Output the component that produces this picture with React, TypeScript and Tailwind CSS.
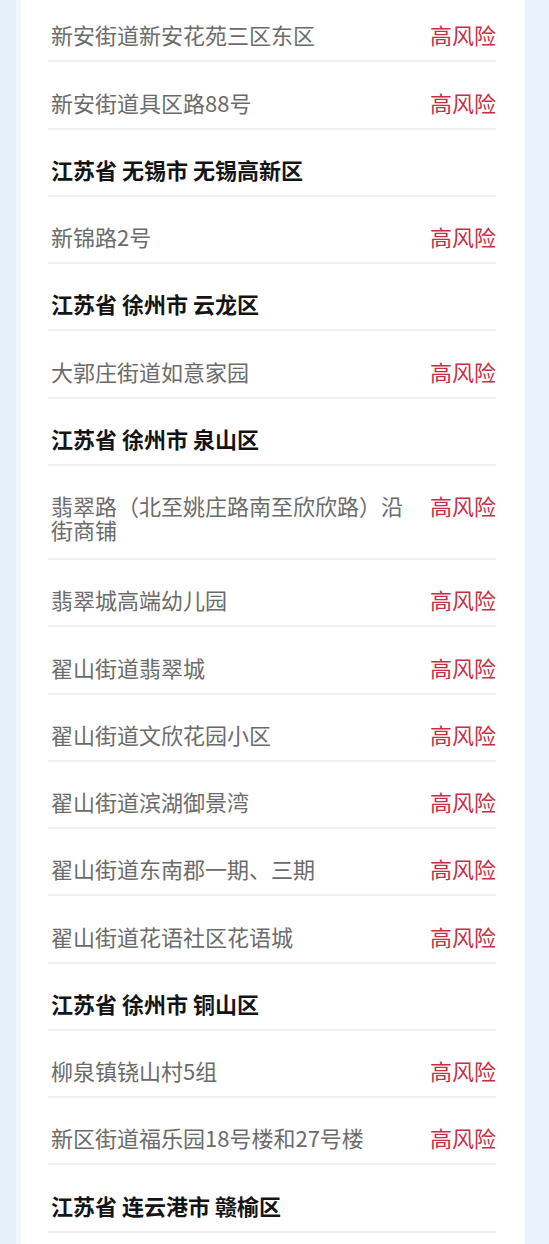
import React from "react";

type Row = { t: string; h?: boolean; m?: boolean };

const rows: Row[] = [
  { t: "新安街道新安花苑三区东区" },
  { t: "新安街道具区路88号" },
  { t: "江苏省 无锡市 无锡高新区", h: true },
  { t: "新锦路2号" },
  { t: "江苏省 徐州市 云龙区", h: true },
  { t: "大郭庄街道如意家园" },
  { t: "江苏省 徐州市 泉山区", h: true },
  { t: "翡翠路（北至姚庄路南至欣欣路）沿街商铺", m: true },
  { t: "翡翠城高端幼儿园" },
  { t: "翟山街道翡翠城" },
  { t: "翟山街道文欣花园小区" },
  { t: "翟山街道滨湖御景湾" },
  { t: "翟山街道东南郡一期、三期" },
  { t: "翟山街道花语社区花语城" },
  { t: "江苏省 徐州市 铜山区", h: true },
  { t: "柳泉镇铙山村5组" },
  { t: "新区街道福乐园18号楼和27号楼" },
  { t: "江苏省 连云港市 赣榆区", h: true },
];

export default function App() {
  return (
    <div
      className="w-[549px] h-[1244px] overflow-hidden bg-[#e6f0fa] flex"
      style={{ fontFamily: '"Noto Sans CJK SC", "Noto Sans", sans-serif' }}
    >
      <div className="w-[16px] shrink-0 bg-[#e6f0fa]" />
      <div className="w-[5px] shrink-0 bg-[#f1f6fc]" />
      <div className="w-[504px] shrink-0 bg-white pl-[27px] pr-[29px]">
        <div className="mt-[-5px] flex flex-col">
          {rows.map((r, i) => (
            <div
              key={i}
              className={
                r.m
                  ? "flex items-start border-b-2 border-[#f0f0f0] pt-[27.25px] pb-[17px] pl-[3px]"
                  : "flex items-start border-b-2 border-[#f0f0f0] pt-[27.25px] pb-[14px] pl-[3px]"
              }
            >
              {r.h ? (
                <span className="flex-1 text-[22px] leading-[24px] font-bold text-[#141416]">
                  {r.t}
                </span>
              ) : (
                <>
                  <span className="flex-1 min-w-0 text-[22px] leading-[24px] text-[#6b6b6b] pr-[20px]">
                    {r.t}
                  </span>
                  <span className="shrink-0 text-[22px] leading-[24px] text-[#c62f47]">
                    高风险
                  </span>
                </>
              )}
            </div>
          ))}
        </div>
      </div>
      <div className="flex-1 bg-[#e9f2fc]" />
    </div>
  );
}
